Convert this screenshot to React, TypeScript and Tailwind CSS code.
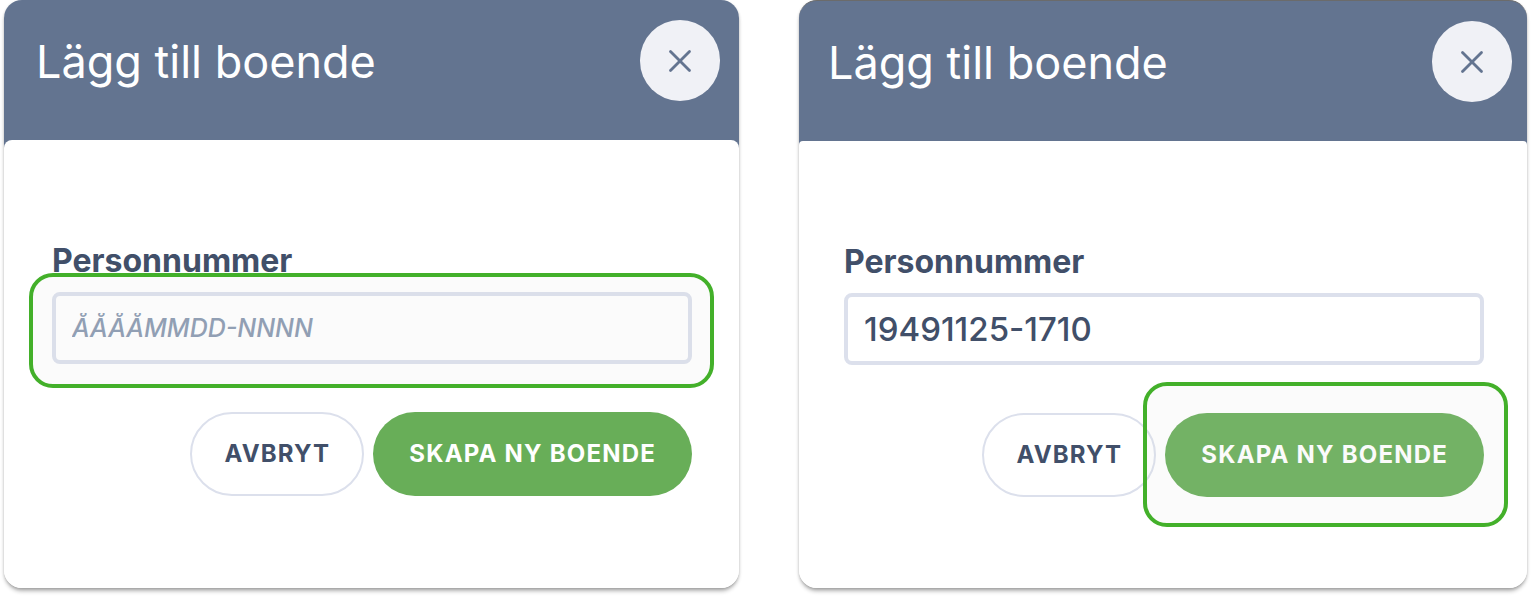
import React, { useState } from 'react';
import { X } from 'lucide-react';

interface ResidentDialogProps {
  id: string;
  initialValue: string;
  highlight: 'input' | 'submit';
  className: string;
  headerClassName: string;
  bodyClassName: string;
}

const Highlight: React.FC<{ className: string }> = ({ className }) => (
  <div
    className={`pointer-events-none absolute rounded-3xl border-4 border-[#43b02a] bg-[#d9d9d9]/10 ${className}`}
  />
);

const ResidentDialog: React.FC<ResidentDialogProps> = ({
  id,
  initialValue,
  highlight,
  className,
  headerClassName,
  bodyClassName,
}) => {
  const [value, setValue] = useState(initialValue);

  return (
    <section
      aria-labelledby={`${id}-title`}
      className={`min-w-0 rounded-[18px] bg-white shadow-[0_4px_4px_-1px_rgba(0,0,0,0.3),0_1px_3px_rgba(0,0,0,0.15)] ${className}`}
    >
      <header
        className={`flex items-start justify-between rounded-t-[18px] bg-[#637490] pt-5 pb-[47px] ${headerClassName}`}
      >
        <h1 id={`${id}-title`} className="pt-3 text-[45px] leading-[60px] text-white">
          Lägg till boende
        </h1>
        <button
          type="button"
          aria-label="Stäng"
          className="flex h-[81px] w-20 shrink-0 items-center justify-center rounded-full bg-[#f0f1f6] text-[#637490]"
        >
          <X size={38} strokeWidth={1.75} />
        </button>
      </header>

      <form
        className={`relative -mt-2 bg-white pt-25 ${bodyClassName}`}
        onSubmit={(e) => e.preventDefault()}
      >
        <label htmlFor={id} className="block text-[32px] leading-[42px] font-bold text-[#414f69]">
          Personnummer
        </label>
        <div className="relative mt-2.5">
          <input
            id={id}
            type="text"
            value={value}
            onChange={(e) => setValue(e.target.value)}
            placeholder="ÅÅÅÅMMDD-NNNN"
            className="block h-18 w-full rounded-lg border-4 border-[#dce0ec] bg-white px-4 text-[33px] font-medium text-[#414f69] outline-none placeholder:text-[#8a99b0] placeholder:italic placeholder-shown:text-[25px]"
          />
          {highlight === 'input' && <Highlight className="-top-[19px] -right-[22px] -bottom-6 -left-[23px]" />}
        </div>

        <div className="mt-12 flex justify-end gap-[9px] text-2xl font-bold tracking-wider">
          <button
            type="button"
            className="h-21 rounded-full border-2 border-[#dce0ec] bg-white px-8 text-[#414f69]"
          >
            AVBRYT
          </button>
          <div className="relative">
            <button type="submit" className="h-21 rounded-full bg-[#68ae58] px-9 text-white">
              SKAPA NY BOENDE
            </button>
            {highlight === 'submit' && <Highlight className="-top-[31px] -right-6 -bottom-[30px] -left-[22px]" />}
          </div>
        </div>
      </form>
    </section>
  );
};

const App: React.FC = () => {
  return (
    <main className="flex min-h-screen items-start gap-15 bg-white px-1 pb-2 font-['Inter',sans-serif]">
      <ResidentDialog
        id="personnummer-empty"
        initialValue=""
        highlight="input"
        className="flex-[735]"
        headerClassName="pl-8 pr-[19px]"
        bodyClassName="rounded-t-lg rounded-b-[18px] pr-[47px] pb-[92px] pl-12"
      />
      <ResidentDialog
        id="personnummer-filled"
        initialValue="19491125-1710"
        highlight="submit"
        className="flex-[728]"
        headerClassName="border-t border-[#6b6b6b] pl-[29px] pr-[15px]"
        bodyClassName="rounded-t-sm rounded-b-[18px] pr-[43px] pb-[91px] pl-[45px]"
      />
    </main>
  );
};

export default App;
